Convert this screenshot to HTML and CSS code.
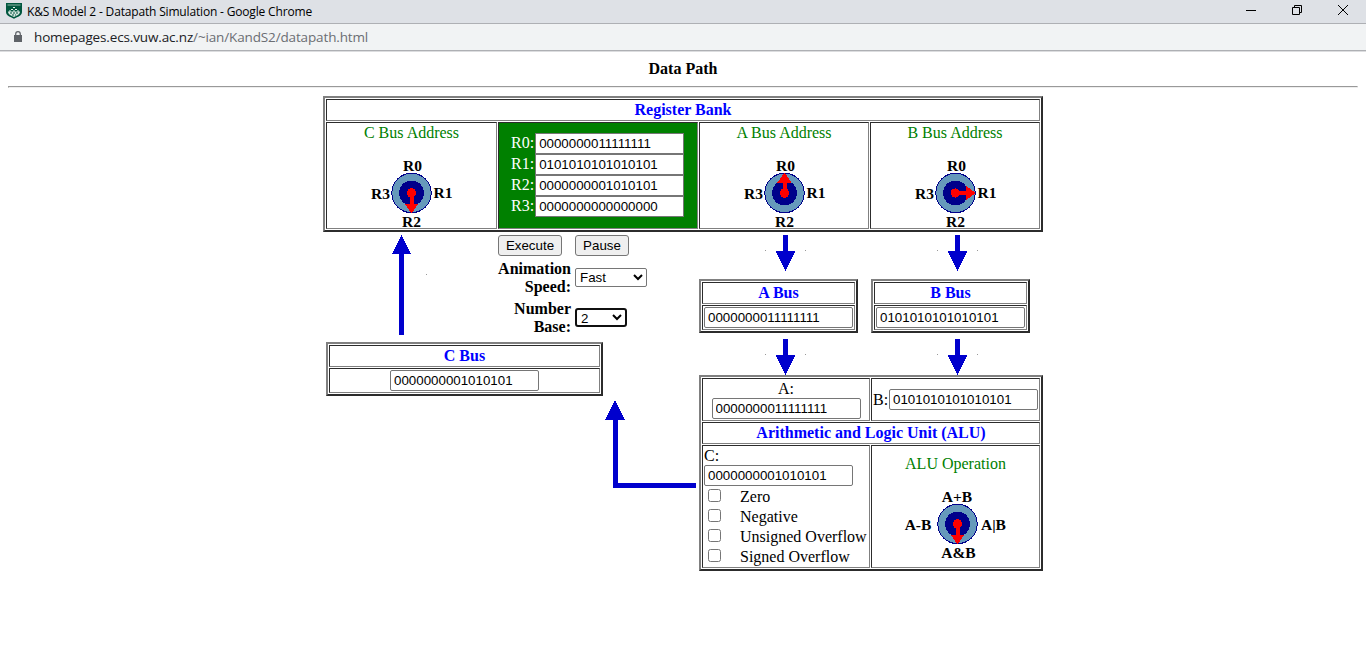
FILE: index.html
```html
<!DOCTYPE html>
<html lang="en">
<head>
<meta charset="utf-8">
<title>K&amp;S Model 2 - Datapath Simulation</title>
<link rel="stylesheet" href="styles.css">
</head>
<body>
<svg class="defs" width="0" height="0" aria-hidden="true">
  <defs>
    <g id="dial" shape-rendering="crispEdges"><circle r="19.7" fill="#6699bb" stroke="#00008b"/><circle r="12.5" fill="#00008b"/></g>
    <path id="needle" shape-rendering="crispEdges" d="M0-4.7A4.7 4.7 0 0 0-2 4.2V10.5H-7L0 20.5L7 10.5H2V4.2A4.7 4.7 0 0 0 0-4.7Z" fill="red"/>
    <g id="down" shape-rendering="crispEdges"><path d="M18 0h5v16h7.5L20.5 36L10.5 16H18z" fill="#0000cd"/><path d="M0 15h1v1H0zM40 15h1v1h-1z" fill="#999"/></g>
  </defs>
</svg>

<header class="titlebar">
  <svg class="favicon" width="16" height="16" viewBox="0 0 16 16">
    <path d="M0 0h16v9c0 3.600-4 4.700-8 6.800C4 13.700 0 12.600 0 9z" fill="#00573f"/>
    <path d="M2 8.500h12c0 3.200-3.500 4-6 5.500C5.500 12.500 2 11.700 2 8.500z" fill="#d6e5df"/>
    <path d="M7 4.500h2M5 6.500h2M9 6.500h2M3 8h2M7 8h2M11 8h2" stroke="#e5efeb"/>
    <path d="M1.500 2h13" stroke="#8db5a6"/>
    <path d="M4 10h8M6 12h4" stroke="#00573f" stroke-dasharray="2 1"/>
  </svg>
  <span class="title">K&amp;S Model 2 - Datapath Simulation - Google Chrome</span>
  <svg class="winbtns" width="104" height="12" viewBox="0 0 104 12" fill="none" stroke="#000">
    <path d="M0 5.500h10"/>
    <path d="M46.500 2.500h7v7h-7zM48.500 2.500v-2h7v7h-2"/>
    <path d="M92 0l10 10M102 0L92 10"/>
  </svg>
</header>
<div class="urlbar">
  <svg width="8" height="12" viewBox="0 0 8 12"><path d="M0 4h8v7H0z" fill="#5f6368"/><path d="M1.700 4.500V3a2.300 2.300 0 0 1 4.600 0v1.500" fill="none" stroke="#5f6368" stroke-width="1.200"/></svg>
  <span class="url">homepages.ecs.vuw.ac.nz<span class="path">/~ian/KandS2/datapath.html</span></span>
</div>

<main>
  <h1>Data Path</h1>
  <hr>
  <div class="machine">
    <section class="frame bank">
      <div class="cell head">Register Bank</div>
      <div class="cell address">C Bus Address
        <svg class="knob" width="101" height="76" viewBox="0 0 101 76">
          <use href="#dial" x="50.500" y="40"/><use href="#needle" x="50.500" y="40"/>
          <text x="51.500" y="18">R0</text><text x="19.500" y="46">R3</text><text x="82" y="45">R1</text><text x="50.500" y="74">R2</text>
        </svg>
      </div>
      <div class="cell registers">
        <label>R0:<input value="0000000011111111"></label>
        <label>R1:<input value="0101010101010101"></label>
        <label>R2:<input value="0000000001010101"></label>
        <label>R3:<input value="0000000000000000"></label>
      </div>
      <div class="cell address">A Bus Address
        <svg class="knob" width="100" height="76" viewBox="0 0 100 76">
          <use href="#dial" x="50.500" y="40"/><use href="#needle" transform="translate(50.500 40) rotate(180)"/>
          <text x="51.500" y="18">R0</text><text x="19.500" y="46">R3</text><text x="82" y="45">R1</text><text x="50.500" y="74">R2</text>
        </svg>
      </div>
      <div class="cell address">B Bus Address
        <svg class="knob" width="100" height="76" viewBox="0 0 100 76">
          <use href="#dial" x="50.500" y="40"/><use href="#needle" transform="translate(50.500 40) rotate(-90)"/>
          <text x="51.500" y="18">R0</text><text x="19.500" y="46">R3</text><text x="82" y="45">R1</text><text x="50.500" y="74">R2</text>
        </svg>
      </div>
    </section>

    <div class="lower">
      <div class="left">
        <div class="upper-left">
          <svg class="c-arrow" width="36" height="100" viewBox="0 0 36 100" shape-rendering="crispEdges"><path d="M9.500 0L19 19h-7v81H7V19H0z" fill="#0000cd"/><path d="M34 39h1v1h-1z" fill="#999"/></svg>
          <div class="controls">
            <button>Execute</button><button>Pause</button>
            <b>Animation Speed:</b><select class="speed"><option>Fast</option></select>
            <b>Number Base:</b><select class="base"><option>2</option></select>
          </div>
        </div>
        <section class="frame bus c-bus">
          <div class="cell head">C Bus</div>
          <div class="cell value"><input value="0000000001010101"></div>
        </section>
        <svg class="elbow" width="91" height="88" viewBox="0 0 91 88" shape-rendering="crispEdges"><path d="M10 0L20 20h-7v63h78v5H8V20H0z" fill="#0000cd"/></svg>
      </div>
      <div class="right">
        <div class="arrows"><svg width="41" height="36"><use href="#down"/></svg><svg width="41" height="36"><use href="#down"/></svg></div>
        <div class="buses">
          <section class="frame bus"><div class="cell head">A Bus</div><div class="cell value"><input value="0000000011111111"></div></section>
          <section class="frame bus"><div class="cell head">B Bus</div><div class="cell value"><input value="0101010101010101"></div></section>
        </div>
        <div class="arrows second"><svg width="41" height="36"><use href="#down"/></svg><svg width="41" height="36"><use href="#down"/></svg></div>
        <section class="frame alu">
          <div class="cell in-a"><span>A:</span><input value="0000000011111111"></div>
          <div class="cell in-b"><span>B:</span><input value="0101010101010101"></div>
          <div class="cell head">Arithmetic and Logic Unit (ALU)</div>
          <div class="cell out-c">
            <span>C:</span><input value="0000000001010101">
            <label><input type="checkbox">Zero</label>
            <label><input type="checkbox">Negative</label>
            <label><input type="checkbox">Unsigned Overflow</label>
            <label><input type="checkbox">Signed Overflow</label>
          </div>
          <div class="cell address operation">ALU Operation
            <svg class="knob" width="111" height="76" viewBox="0 0 111 76">
              <use href="#dial" x="57.500" y="40"/><use href="#needle" x="57.500" y="40"/>
              <text x="57" y="18">A+B</text><text x="18" y="46">A-B</text><text x="93.500" y="46">A|B</text><text x="58.500" y="74">A&amp;B</text>
            </svg>
          </div>
        </section>
      </div>
    </div>
  </div>
</main>
</body>
</html>
```
FILE: styles.css
```css
* { box-sizing: border-box; }
body { margin: 0; height: 645px; overflow: hidden; background: #fff; color: #000; font: 16px/18px "Liberation Serif", serif; }
svg { display: block; flex: none; }
.defs { position: absolute; }

.titlebar { display: flex; height: 24px; padding: 0 16px 0 6px; background: #dee1e6; border-bottom: 1px solid #aeb0b4; font: 12px/23px "Open Sans", sans-serif; }
.favicon { margin: 3px 5px 0 0; }
.title { white-space: nowrap; letter-spacing: -0.17px; }
.winbtns { margin: 5px 0 0 auto; }
.urlbar { display: flex; height: 27px; padding: 0 14px; gap: 12px; background: #f1f3f4; border-bottom: 1px solid #aeb0b4; box-shadow: 0 1px #dcdddf; font: 13.5px/26px "Open Sans", sans-serif; color: #202124; }
.urlbar svg { margin-top: 7px; }
.url { white-space: nowrap; letter-spacing: -0.14px; }
.path { color: #6b6e73; }

h1 { margin: 9px 0 0; font-size: 16px; line-height: 18px; text-align: center; }
hr { height: 2px; margin: 8px 8px 0; border: solid; border-width: 1px; border-color: #999 #eee #eee #999; }
.machine { width: 720px; margin: 8px 0 0 323px; }

.frame { display: grid; gap: 1px; padding: 1px; border: 2px solid; border-color: #808080 #2c2c2c #2c2c2c #808080; }
.cell { min-width: 0; padding: 1px; border: 1px solid; border-color: #2c2c2c #808080 #808080 #2c2c2c; }
.head { grid-column: 1 / -1; color: #00f; font-weight: bold; text-align: center; }
.bank { height: 136px; grid-template: 22px 107px / 171px 200px 170px 170px; }
.address { color: #008000; text-align: center; }
.knob { margin: 11px auto 0; }
.knob text { font: bold 15.5px "Liberation Serif", serif; fill: #000; text-anchor: middle; }
.registers { padding: 10px 12px 0; background: #008000; color: #fff; }
.registers label { display: flex; height: 21px; line-height: 20px; }
input:not([type=checkbox]) { display: block; flex: none; width: 149px; height: 21px; margin: 0; padding: 0 3px; border: 1px solid #767676; border-radius: 2px; background: #fff; color: #000; font: 13.333px "Liberation Sans", sans-serif; }
.registers input { margin-left: 1px; border-radius: 0; }

.lower { display: grid; grid-template-columns: 376px 344px; }
.upper-left { display: flex; height: 110px; padding: 3px 0 0 69px; }
.controls { display: grid; grid-template: 21px 36px 36px / 73px 72px; gap: 4px; margin-left: 70px; align-items: center; }
.controls button { justify-self: start; width: 64px; height: 21px; padding: 0; border: 1px solid #767676; border-radius: 3px; background: #efefef; color: #000; font: 13.333px "Liberation Sans", sans-serif; }
.controls button + button { width: 54px; }
.controls b { text-align: right; }
select { height: 19px; margin: 0 0 2px; padding: 0; border: 1px solid #767676; border-radius: 2px; background: #fff; color: #000; font: 13.333px "Liberation Sans", sans-serif; }
.speed { width: 72px; }
.base { width: 52px; border: 2px solid #101010; border-radius: 3px; }
.bus { height: 54px; grid-template: 22px 25px / 1fr; }
.value { display: flex; justify-content: center; }
.c-bus { width: 277px; margin-left: 3px; }
.elbow { margin: 4px 0 0 282px; }

.arrows { display: flex; gap: 131px; padding: 3px 0 8px 66px; }
.second { padding: 6px 0 0 66px; }
.buses { display: grid; grid-template-columns: 159px 159px; gap: 13px; }
.alu { height: 196px; grid-template: 43px 22px 123px / 168px 169px; }
.in-a { display: flex; flex-direction: column; align-items: center; }
.in-b { display: flex; align-items: center; }
.in-b span { width: 16px; }
.out-c label { display: flex; height: 20px; white-space: nowrap; line-height: 21px; }
.out-c span { display: block; line-height: 18px; }
[type=checkbox] { width: 13px; height: 13px; margin: 3px 19px 0 4px; }
.operation { padding-top: 9px; }
```
